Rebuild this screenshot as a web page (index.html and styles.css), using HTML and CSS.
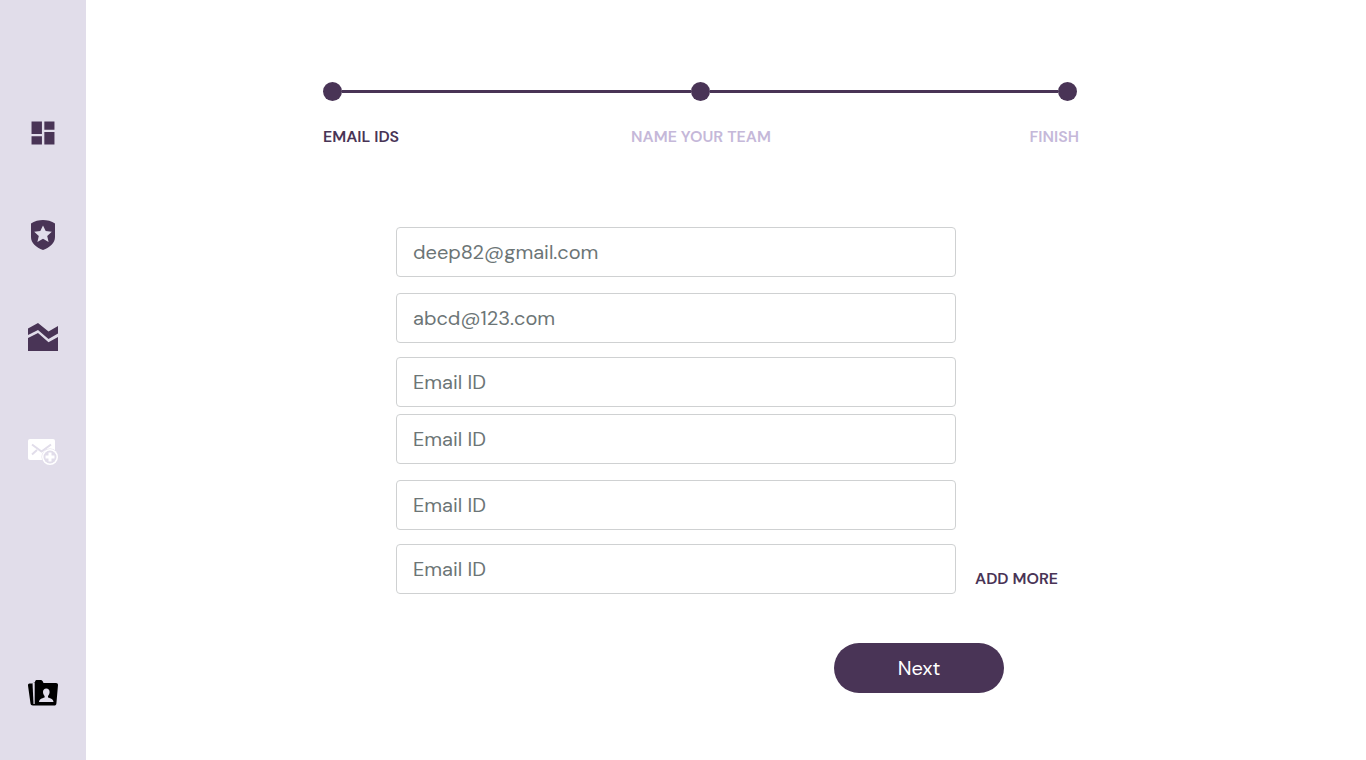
FILE: index.html
```html
<!DOCTYPE html>
<html lang="en">
<head>
<meta charset="utf-8">
<title>Invite your team</title>
<link rel="stylesheet" href="styles.css">
</head>
<body>
<div class="app">
  <nav class="sidebar" aria-label="Main">
    <a class="nav-link" href="#" aria-label="Dashboard">
      <svg class="icon" viewBox="0 0 24 24"><path d="M3.400 12.800h7.800V3.400H3.400zm0 7.800h7.800v-6.200H3.400zm9.600 0h7.600v-9.400H13zm0-17.200v6.200h7.600V3.400z"/></svg>
    </a>
    <a class="nav-link" href="#" aria-label="Security">
      <svg class="icon" viewBox="0 0 32 32"><path fill-rule="evenodd" d="M16 1C12.500 1 7 2 4 4.500V18c0 6 5 10.500 12 13 7-2.500 12-7 12-13V4.500C25 2 19.500 1 16 1zM16 6.500l2.700 5.600 6.100.7-4.600 4.100 1.400 6.100-5.600-3.200L10.400 23l1.400-6.100-4.600-4.100 6.100-.7z"/></svg>
    </a>
    <a class="nav-link" href="#" aria-label="Reports">
      <svg class="icon" viewBox="0 0 32 32"><path d="M1 7.500 11 2l10.500 8.500L31 5v7.500l-9.500 5.500L11 9 1 14z"/><path d="M1 17 11 12l10.500 9.200L31 16V30H1z"/></svg>
    </a>
    <a class="nav-link nav-link-active" href="#" aria-label="Invite by email">
      <svg class="icon" viewBox="0 0 32 32"><rect x="1" y="3" width="27" height="21" rx="2"/><path class="cut-line" d="M5 8.500l9.500 7L24 8.500M5 18.500l5-4.500M19 14l2 1.500"/><circle class="cut" cx="23" cy="21" r="8.500"/><circle cx="23" cy="21" r="8"/><circle class="cut" cx="23" cy="21" r="6.500"/><path d="M21.500 16.500h3v3h3v3h-3v3h-3v-3h-3v-3h3z"/></svg>
    </a>
    <a class="nav-link nav-link-bottom" href="#" aria-label="Contacts">
      <svg class="icon" viewBox="0 0 32 32"><path d="M8 4c0-1.500 1-2 2-2h4c1 0 1.500.7 2.500 3H29c1.300 0 2 .8 2 2l-1.600 18.500c-.2 1.600-1 2-2 2H6c-1.500 0-2.400-.8-2.500-2L1 7.500C.9 6.200 1.500 5.500 2.500 5.500H5z"/><path class="cut-bar" d="M5.500 4.500h2.200V26H6.500z"/><path class="cut-fill" d="M19.300 10.500c-2 0-3.300 1.400-3.300 3.500 0 1.800.8 3.200 1.600 4v1.500c-2.800 1-5.400 1.500-5.600 4.500h14.500c-.2-3-2.800-3.500-5.500-4.500V18c.8-.8 1.600-2.200 1.600-4 0-2.100-1.300-3.500-3.300-3.500z"/></svg>
    </a>
  </nav>
  <main class="main">
    <div class="content">
      <div class="track" aria-hidden="true"><span class="dot"></span><span class="line"></span><span class="dot"></span><span class="line"></span><span class="dot"></span></div>
      <ol class="steps">
        <li class="step step-current" aria-current="step">EMAIL IDS</li>
        <li class="step">NAME YOUR TEAM</li>
        <li class="step">FINISH</li>
      </ol>
      <form class="form">
        <div class="entry">
          <div class="fields">
            <div class="group">
              <input class="field field-wide" type="email" placeholder="deep82@gmail.com" aria-label="Email 1">
              <input class="field" type="email" placeholder="abcd@123.com" aria-label="Email 2">
              <input class="field" type="email" placeholder="Email ID" aria-label="Email 3">
            </div>
            <div class="group">
              <input class="field field-wide" type="email" placeholder="Email ID" aria-label="Email 4">
              <input class="field" type="email" placeholder="Email ID" aria-label="Email 5">
              <input class="field" type="email" placeholder="Email ID" aria-label="Email 6">
            </div>
          </div>
          <button class="add" type="button">ADD MORE</button>
        </div>
        <button class="next" type="submit">Next</button>
      </form>
    </div>
  </main>
</div>
</body>
</html>
```
FILE: styles.css
```css
* { box-sizing: border-box; }

body {
  margin: 0;
  background: #fff;
  color: #493456;
  font-family: "DM Sans", Inter, "Liberation Sans", sans-serif;
}

input, button { font: inherit; }

.app { display: flex; min-height: 100vh; }

.sidebar {
  display: flex;
  flex-direction: column;
  align-items: center;
  gap: 70px;
  flex: 0 0 86px;
  padding: 117px 0 50px;
  background: #e1ddea;
}

.nav-link { display: block; height: 32px; color: #493456; }
.nav-link-active { margin-top: 13px; color: #fff; }
.nav-link-bottom { margin-top: auto; color: #000; }

.icon { display: block; width: 32px; height: 32px; fill: currentColor; }
.cut, .cut-fill, .cut-bar { fill: #e1ddea; }
.cut-line { fill: none; stroke: #e1ddea; stroke-width: 2; }

.main { flex: 1; padding: 82px 24px 60px 17.35%; }
.content { max-width: 756px; }

.track { display: flex; align-items: center; padding-right: 2px; }
.dot { width: 19px; height: 19px; border-radius: 50%; background: #493456; }
.line { flex: 1; height: 3px; background: #493456; }

.steps {
  display: grid;
  grid-template-columns: repeat(3, 1fr);
  margin: 24px 0 78px;
  padding: 0;
  list-style: none;
}

.step {
  color: #c5b8d9;
  font-size: 16px;
  font-weight: 600;
  line-height: 24px;
  text-align: center;
}
.step:first-child { text-align: left; }
.step:last-child { text-align: right; }
.step-current { color: #493456; }

.form { display: flex; flex-direction: column; padding-left: 73px; }
.entry { display: flex; align-items: flex-end; gap: 19px; }

.fields { display: flex; flex-direction: column; gap: 7px; flex: 0 1 560px; }
.group { display: flex; flex-direction: column; gap: 14px; }

.field {
  width: 100%;
  height: 50px;
  padding: 0 16px;
  border: 1px solid #cfd1d2;
  border-radius: 4px;
  background: #fff;
  color: #493456;
  font-size: 20px;
}
.field-wide { margin-bottom: 2px; }
.field::placeholder { color: #6c7576; opacity: 1; }

.add {
  margin-bottom: 3px;
  padding: 0;
  border: 0;
  background: none;
  color: #493456;
  font-size: 16px;
  font-weight: 600;
  line-height: 24px;
  white-space: nowrap;
}

.next {
  align-self: flex-end;
  width: 170px;
  height: 50px;
  margin: 49px 75px 0 0;
  border: 0;
  border-radius: 25px;
  background: #493456;
  color: #fff;
  font-size: 20px;
}
```
